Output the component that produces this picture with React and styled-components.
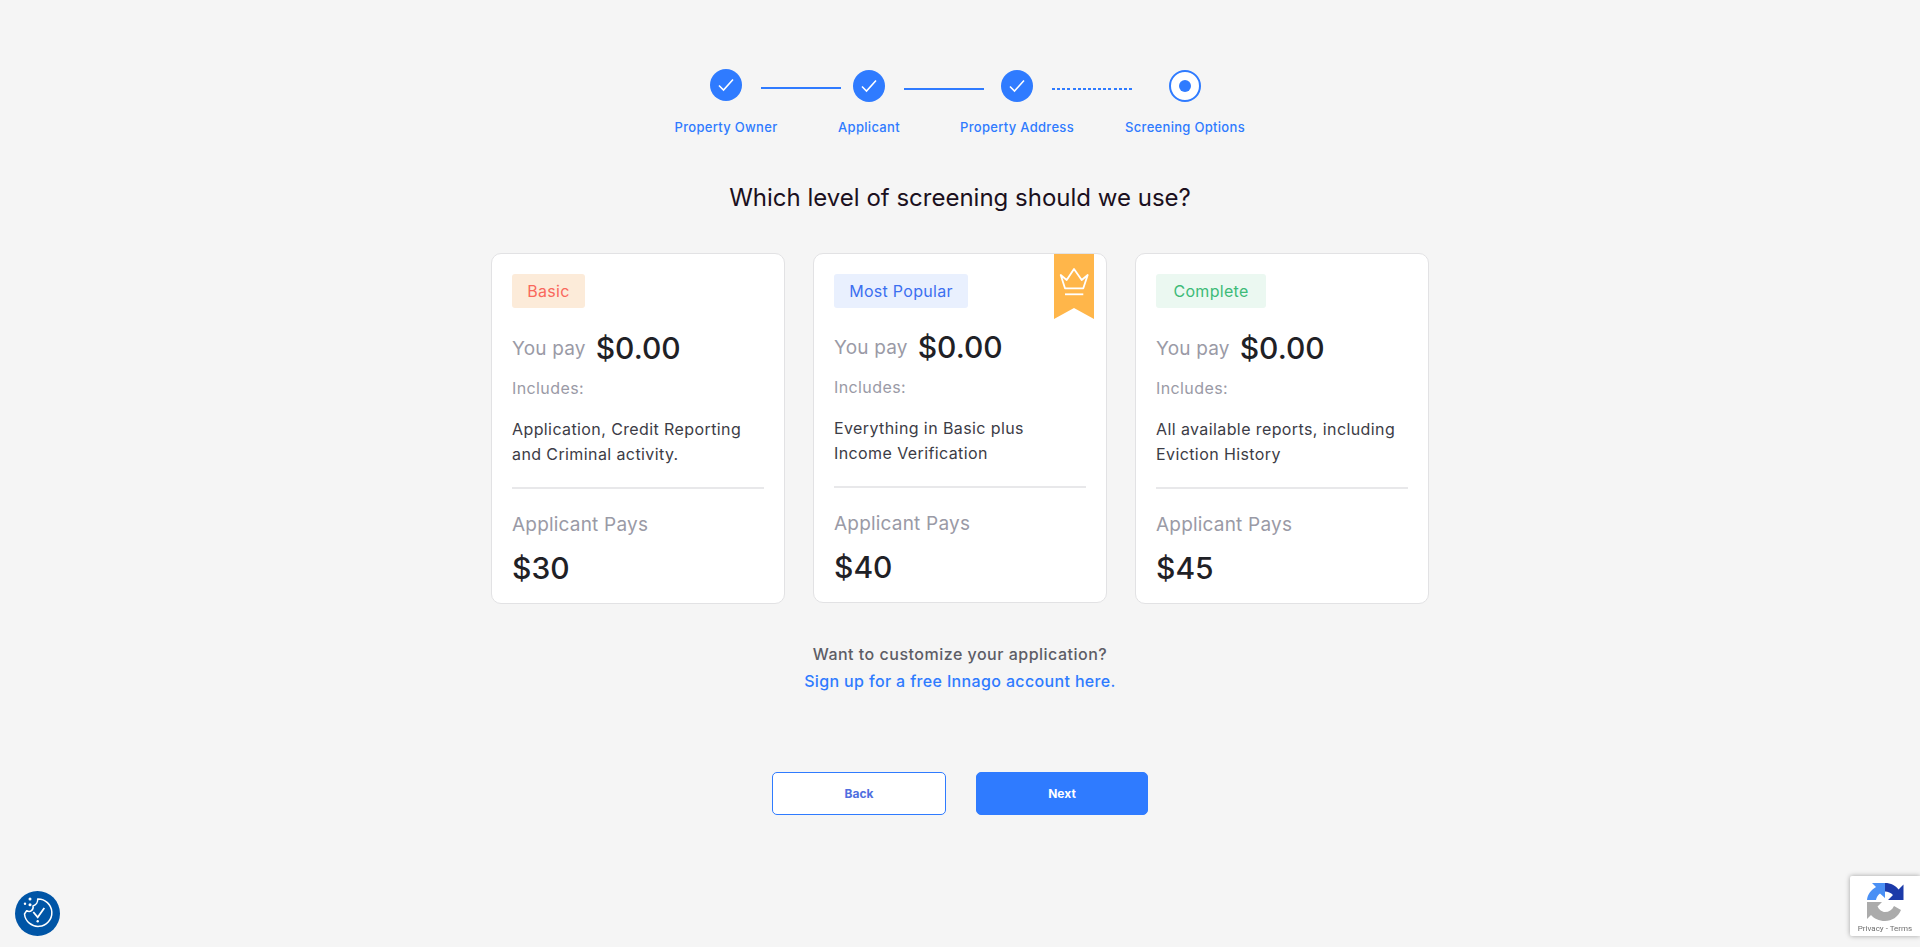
import React from 'react';
import styled, { createGlobalStyle } from 'styled-components';

const GlobalStyle = createGlobalStyle`
  html, body {
    margin: 0;
    padding: 0;
    height: 100%;
    background: #f5f5f5;
    font-family: Inter, "Open Sans", "Liberation Sans", sans-serif;
    overflow: hidden;
  }
  * { box-sizing: border-box; }
`;

const blue = '#2f7bff';

const Page = styled.div`
  display: flex;
  flex-direction: column;
  align-items: center;
  padding-top: 69px;
`;

const Stepper = styled.div`
  display: flex;
  flex-direction: column;
  align-items: center;
  margin-right: 9px;
`;

const StepRow = styled.div`
  display: flex;
  align-items: flex-start;
  height: 33px;
`;

const Circle = styled.div`
  width: 32px;
  height: 32px;
  margin-top: ${(p) => p.$top || 0}px;
  border-radius: 50%;
  display: flex;
  align-items: center;
  justify-content: center;
  background: ${(p) => (p.$current ? '#fff' : blue)};
  border: ${(p) => (p.$current ? `2px solid ${blue}` : 'none')};
`;

const Dot = styled.span`
  width: 12px;
  height: 12px;
  border-radius: 50%;
  background: ${blue};
`;

const Connector = styled.div`
  width: 80px;
  height: 2px;
  margin: ${(p) => p.$top}px ${(p) => p.$after}px 0 19px;
  background: ${(p) =>
    p.$dotted ? `repeating-linear-gradient(90deg, ${blue} 0 3px, transparent 3px 5.13px)` : blue};
`;

const LabelRow = styled.div`
  display: flex;
  margin-top: 16px;
`;

const StepLabel = styled.div`
  width: 120px;
  margin-right: ${(p) => p.$after || 0}px;
  text-align: center;
  font-size: 13px;
  line-height: 18px;
  font-weight: 500;
  letter-spacing: 0.3px;
  color: ${blue};
  white-space: nowrap;
`;

const Title = styled.h1`
  margin: 44px 0 0;
  font-size: 24px;
  line-height: 36px;
  font-weight: 400;
  color: #1b1020;
`;

const Cards = styled.div`
  display: flex;
  align-items: flex-start;
  gap: 28px;
  margin-top: 37px;
`;

const Card = styled.div`
  position: relative;
  width: 294px;
  height: ${(p) => (p.$tight ? 350 : 351)}px;
  padding: 20px 20px 0;
  background: #fff;
  border: 1px solid #e2e2e4;
  border-radius: 10px;
`;

const Ribbon = styled.svg`
  position: absolute;
  top: 0;
  right: 12px;
`;

const Badge = styled.div`
  width: ${(p) => p.$width}px;
  height: 34px;
  border-radius: 3px;
  text-align: center;
  font-size: 16px;
  line-height: 34px;
  letter-spacing: 0.3px;
  background: ${(p) => p.$bg};
  color: ${(p) => p.$color};
`;

const PriceRow = styled.div`
  display: flex;
  align-items: center;
  gap: 10px;
  height: 40px;
  margin-top: ${(p) => (p.$tight ? 19 : 20)}px;
`;

const Muted = styled.div`
  font-size: 19px;
  letter-spacing: 0.2px;
  color: #9a9aa6;
`;

const Amount = styled.div`
  font-size: 30px;
  line-height: 40px;
  font-weight: 500;
  color: #1f2126;
`;

const Includes = styled.div`
  margin-top: 8px;
  font-size: 16px;
  line-height: 24px;
  letter-spacing: 0.4px;
  color: #9a9aa6;
`;

const Description = styled.p`
  margin: 17px 0 0;
  height: 50px;
  font-size: 16px;
  line-height: 25px;
  letter-spacing: 0.4px;
  color: #3c3c46;
  white-space: nowrap;
`;

const Divider = styled.div`
  height: 2px;
  margin-top: 20px;
  background: #e8e8ea;
`;

const PaysLabel = styled(Muted)`
  margin-top: 23px;
  line-height: 26px;
`;

const PaysAmount = styled(Amount)`
  margin-top: 10px;
`;

const Customize = styled.div`
  margin-top: 37px;
  text-align: center;
  font-size: 16px;
  line-height: 27px;
  font-weight: 500;
  letter-spacing: 0.5px;
  color: #5d5d66;
`;

const SignUp = styled.a`
  display: block;
  letter-spacing: 0.35px;
  color: ${blue};
  text-decoration: none;
`;

const Buttons = styled.div`
  display: flex;
  gap: 30px;
  margin-top: 77px;
`;

const Button = styled.button`
  width: ${(p) => (p.$primary ? 172 : 174)}px;
  height: 43px;
  border-radius: 5px;
  border: 1px solid ${blue};
  background: ${(p) => (p.$primary ? blue : '#fff')};
  color: ${(p) => (p.$primary ? '#fff' : '#4f6fe0')};
  font-family: inherit;
  font-size: 12px;
  font-weight: 700;
`;

const CookieBadge = styled.div`
  position: fixed;
  left: 15px;
  bottom: 11px;
  width: 45px;
  height: 45px;
  border-radius: 50%;
  background: #0055a6;
  display: flex;
`;

const Recaptcha = styled.div`
  position: fixed;
  right: 0;
  bottom: 11px;
  width: 70px;
  height: 60px;
  background: #fff;
  border-radius: 2px 0 0 2px;
  box-shadow: 0 0 5px rgba(0, 0, 0, 0.35);
  display: flex;
  flex-direction: column;
  align-items: center;
  padding-top: 6px;
`;

const RecaptchaText = styled.div`
  margin-top: 2px;
  font-family: Roboto, "Liberation Sans", sans-serif;
  font-size: 8px;
  line-height: 10px;
  color: #6f6f6f;
  white-space: nowrap;
`;

const Check = () => (
  <svg width="16" height="16" viewBox="0 0 16 16" fill="none">
    <path d="M1 8.5 L5.5 13 L15 2.5" stroke="#fff" strokeWidth="1.6" />
  </svg>
);

const Crown = () => (
  <Ribbon width="40" height="65" viewBox="0 0 40 65">
    <path d="M0 0H40V65L20 54L0 65Z" fill="#ffb64a" />
    <path
      d="M6.7 21L12.7 26L20 15L27.7 26L33.7 21L29.3 34.3H11Z"
      fill="none"
      stroke="#fff"
      strokeWidth="1.8"
      strokeLinejoin="round"
    />
    <path d="M11 40.3H29.3" stroke="#fff" strokeWidth="1.8" />
  </Ribbon>
);

const CookieIcon = () => (
  <svg width="45" height="45" viewBox="0 3 45 45" fill="none">
    <path
      d="M22.7 11 A13.7 13.7 0 1 1 9.5 26 L11.7 22.7 C15 25 19 22 18 18 C21 17 23 14 22.7 11Z"
      stroke="#fff"
      strokeWidth="1.5"
      strokeLinejoin="round"
    />
    <circle cx="15" cy="11" r="1.5" fill="#fff" />
    <circle cx="10" cy="15.7" r="1.2" fill="#fff" />
    <circle cx="15" cy="16.7" r="1.5" fill="#fff" />
    <path d="M18.3 24 L22.7 29.3 L29.3 20" stroke="#fff" strokeWidth="1.8" />
    <circle cx="22.7" cy="33.3" r="1.2" fill="#fff" />
  </svg>
);

const RecaptchaLogo = () => (
  <svg width="39" height="40" viewBox="4 4 39 40">
    <path d="M23 5 C29 5 33.5 7.5 36.5 11.5 L41.5 6.5 V22 H26 L31 17 C29 15 26 13.5 23 13.5Z" fill="#1c3aa9" />
    <path d="M23 5 H10 L14 9 C9 12 5.5 16.5 5 22 H14 C14.5 19 16 17 18 15.5 L23 20Z" fill="#4a90f5" />
    <path d="M5 24 H20 L15.5 28.5 C17 31.5 20 34 23 34 C27 34 30 32 32 28 L39 32 C36 39 30 43 23 43 C17 43 12 40.5 9 37 L5 41Z" fill="#ababab" />
  </svg>
);

const plans = [
  {
    badge: 'Basic',
    width: 73,
    bg: '#fcebd9',
    color: '#f9685c',
    text: ['Application, Credit Reporting', 'and Criminal activity.'],
    pays: '$30',
  },
  {
    badge: 'Most Popular',
    width: 134,
    bg: '#e9f0fe',
    color: '#3c6ff0',
    text: ['Everything in Basic plus', 'Income Verification'],
    pays: '$40',
    popular: true,
  },
  {
    badge: 'Complete',
    width: 110,
    bg: '#ebf8f1',
    color: '#3dbb78',
    text: ['All available reports, including', 'Eviction History'],
    pays: '$45',
  },
];

const App = () => (
  <>
    <GlobalStyle />
    <Page>
      <Stepper>
        <StepRow>
          <Circle><Check /></Circle>
          <Connector $top={18} $after={12} />
          <Circle $top={1}><Check /></Circle>
          <Connector $top={19} $after={17} />
          <Circle $top={1}><Check /></Circle>
          <Connector $top={19} $after={37} $dotted />
          <Circle $top={1} $current><Dot /></Circle>
        </StepRow>
        <LabelRow>
          <StepLabel $after={23}>Property Owner</StepLabel>
          <StepLabel $after={28}>Applicant</StepLabel>
          <StepLabel $after={48}>Property Address</StepLabel>
          <StepLabel>Screening Options</StepLabel>
        </LabelRow>
      </Stepper>
      <Title>Which level of screening should we use?</Title>
      <Cards>
        {plans.map((plan) => (
          <Card key={plan.badge} $tight={plan.popular}>
            {plan.popular && <Crown />}
            <Badge $width={plan.width} $bg={plan.bg} $color={plan.color}>{plan.badge}</Badge>
            <PriceRow $tight={plan.popular}>
              <Muted>You pay</Muted>
              <Amount>$0.00</Amount>
            </PriceRow>
            <Includes>Includes:</Includes>
            <Description>
              {plan.text[0]}
              <br />
              {plan.text[1]}
            </Description>
            <Divider />
            <PaysLabel>Applicant Pays</PaysLabel>
            <PaysAmount>{plan.pays}</PaysAmount>
          </Card>
        ))}
      </Cards>
      <Customize>
        Want to customize your application?
        <SignUp href="#">Sign up for a free Innago account here.</SignUp>
      </Customize>
      <Buttons>
        <Button>Back</Button>
        <Button $primary>Next</Button>
      </Buttons>
    </Page>
    <CookieBadge><CookieIcon /></CookieBadge>
    <Recaptcha>
      <RecaptchaLogo />
      <RecaptchaText>Privacy - Terms</RecaptchaText>
    </Recaptcha>
  </>
);

export default App;
